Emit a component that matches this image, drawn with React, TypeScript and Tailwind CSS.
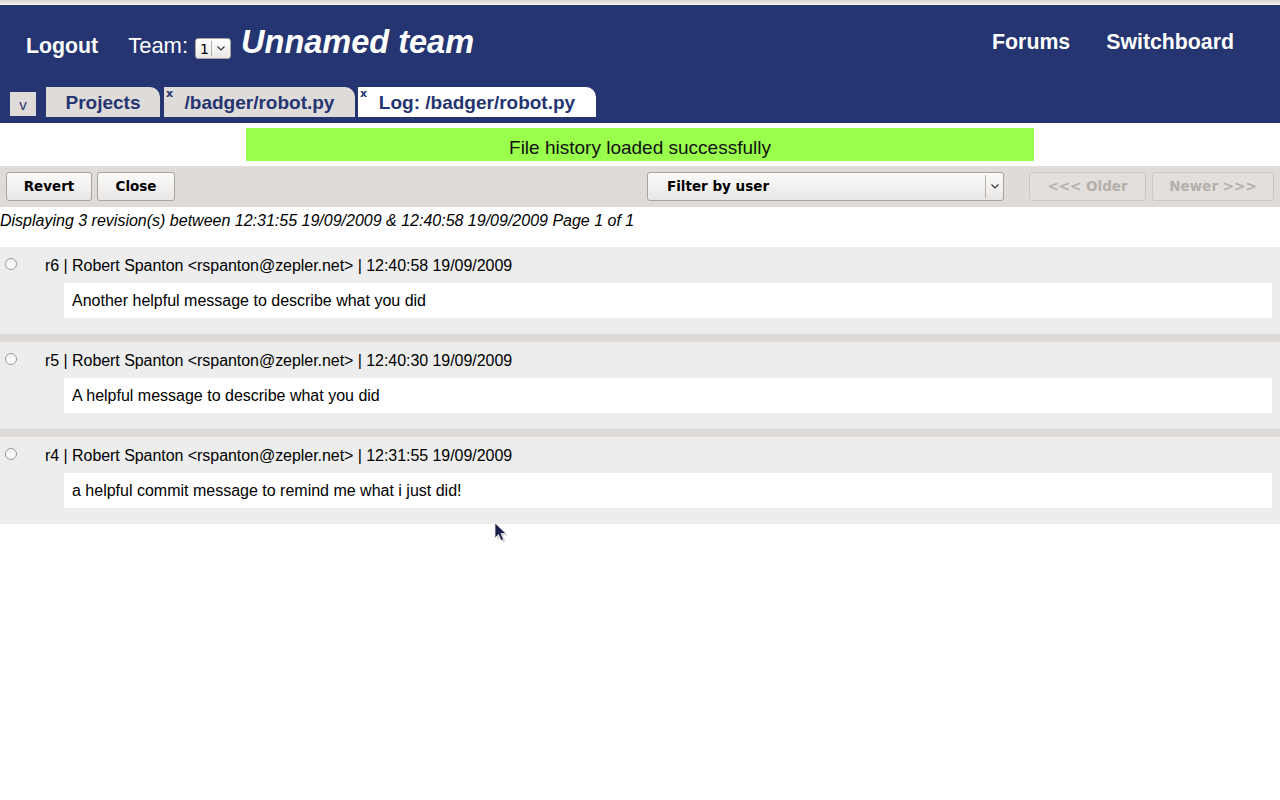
import React from "react";

function Chevron({ className = "" }: { className?: string }) {
  return (
    <svg width="8" height="5" viewBox="0 0 8 5" className={className}>
      <path d="M0.5 0.5 L4 4 L7.5 0.5" fill="none" stroke="#333" strokeWidth="1.1" />
    </svg>
  );
}

function Tab({
  label,
  width,
  active,
  closable,
}: {
  label: string;
  width: string;
  active?: boolean;
  closable?: boolean;
}) {
  return (
    <div
      className={`relative h-[30px] ${width} rounded-tr-[10px] flex items-center justify-center ${
        active ? "bg-white" : "bg-[#dfdbd8]"
      }`}
    >
      {closable && (
        <span className="absolute left-[2px] top-[1px] text-[11px] leading-none font-bold text-[#253571] font-['DejaVu_Sans',sans-serif]">
          x
        </span>
      )}
      <span className="text-[19px] font-bold text-[#253571] leading-none">{label}</span>
    </div>
  );
}

function Btn({ label, width, disabled }: { label: string; width: string; disabled?: boolean }) {
  return (
    <div
      className={`h-[29px] ${width} rounded-[3px] border flex items-center justify-center text-[13.5px] font-bold font-['DejaVu_Sans',sans-serif] ${
        disabled
          ? "border-[#cdc8c3] bg-[#e3dfdc] text-[#b3afab]"
          : "border-[#a9a49f] bg-gradient-to-b from-[#fbfbfa] to-[#e9e7e5] text-black"
      }`}
    >
      {label}
    </div>
  );
}

function Row({ header, message }: { header: string; message: string }) {
  return (
    <div className="flex bg-[#ededed] h-[87px]">
      <div className="w-[45px] pl-[5px] pt-[11px]">
        <div className="w-[12px] h-[12px] rounded-full border border-[#9a9a9a] bg-gradient-to-b from-[#f2f2f2] to-white" />
      </div>
      <div className="flex-1 pr-[8px] pt-[10px]">
        <div className="text-[16px] leading-[18px] tracking-[-0.05px] text-black">{header}</div>
        <div className="ml-[19px] mt-[8px] h-[35px] bg-white flex items-center pl-[8px] text-[16px] leading-[18px] text-black">
          {message}
        </div>
      </div>
    </div>
  );
}

export default function App() {
  return (
    <div className="relative w-[1280px] h-[800px] bg-white font-['Liberation_Sans',Arial,sans-serif] overflow-hidden">
      <div className="h-[5px] bg-gradient-to-b from-[#d9d6d2] to-[#f3f2f0]" />
      <div className="bg-[#253571]">
        <div className="flex justify-between h-[78px]">
          <div className="flex items-baseline pl-[26px] pt-[21px] text-white leading-none">
            <span className="text-[21.3px] font-bold">Logout</span>
            <span className="text-[22px] ml-[30px]">Team:</span>
            <span className="self-start mt-[12px] ml-[7px] inline-flex items-center h-[21px] w-[36px] rounded-[3px] border border-[#a9a49f] bg-gradient-to-b from-white to-[#ebe9e7] text-black">
              <span className="text-[14px] leading-none pl-[4px] pr-[2px] font-['DejaVu_Sans',sans-serif]">1</span>
              <span className="h-[15px] w-px bg-[#b5b0ab]" />
              <span className="flex-1 flex justify-center">
                <Chevron />
              </span>
            </span>
            <span className="text-[32.5px] font-bold italic ml-[10px]">Unnamed team</span>
          </div>
          <div className="flex items-baseline pr-[46px] pt-[27px] gap-[36px] text-white leading-none">
            <span className="text-[21.3px] font-bold">Forums</span>
            <span className="text-[21.3px] font-bold">Switchboard</span>
          </div>
        </div>
        <div className="flex items-end h-[40px] pl-[10px] pb-[6px]">
          <div className="w-[26px] h-[24px] mb-[1px] bg-[#dfdbd8] flex items-center justify-center text-[15px] text-[#253571] leading-none">
            v
          </div>
          <div className="ml-[10px]">
            <Tab label="Projects" width="w-[114px]" />
          </div>
          <div className="ml-[4px]">
            <Tab label="/badger/robot.py" width="w-[191px]" closable />
          </div>
          <div className="ml-[3px]">
            <Tab label="Log: /badger/robot.py" width="w-[238px]" active closable />
          </div>
        </div>
      </div>

      <div className="mt-[5px] mx-auto w-[788px] h-[33px] bg-[#99ff4c] flex items-center justify-center pt-[6px] text-[19px] leading-none text-[#111]">
        File history loaded successfully
      </div>

      <div className="mt-[5px] h-[41px] bg-[#dfdbd8] flex items-center justify-between px-[6px]">
        <div className="flex gap-[5px]">
          <Btn label="Revert" width="w-[86px]" />
          <Btn label="Close" width="w-[78px]" />
        </div>
        <div className="flex items-center">
          <div className="h-[29px] w-[357px] rounded-[3px] border border-[#a9a49f] bg-gradient-to-b from-[#fbfbfa] to-[#e9e7e5] flex items-center">
            <span className="flex-1 pl-[19px] text-[13.5px] font-bold font-['DejaVu_Sans',sans-serif] text-black">
              Filter by user
            </span>
            <span className="h-[23px] w-px bg-[#b5b0ab]" />
            <span className="w-[17px] flex justify-center">
              <Chevron />
            </span>
          </div>
          <div className="ml-[25px]">
            <Btn label="<<< Older" width="w-[117px]" disabled />
          </div>
          <div className="ml-[6px]">
            <Btn label="Newer >>>" width="w-[122px]" disabled />
          </div>
        </div>
      </div>

      <div className="mt-[5px] text-[16px] leading-[18px] italic text-black">
        Displaying 3 revision(s) between 12:31:55 19/09/2009 &amp; 12:40:58 19/09/2009 Page 1 of 1
      </div>

      <div className="mt-[17px] flex flex-col">
        <Row
          header="r6 | Robert Spanton <rspanton@zepler.net> | 12:40:58 19/09/2009"
          message="Another helpful message to describe what you did"
        />
        <div className="h-[8px] bg-[#dfdbd8]" />
        <Row
          header="r5 | Robert Spanton <rspanton@zepler.net> | 12:40:30 19/09/2009"
          message="A helpful message to describe what you did"
        />
        <div className="h-[8px] bg-[#dfdbd8]" />
        <Row
          header="r4 | Robert Spanton <rspanton@zepler.net> | 12:31:55 19/09/2009"
          message="a helpful commit message to remind me what i just did!"
        />
      </div>

      <svg className="absolute left-[494px] top-[522px]" width="14" height="22" viewBox="0 0 14 22">
        <path d="M2 2 L2 17 L5.5 13.5 L8 19.5 L10.5 18.5 L8 12.5 L13 12.5 Z" fill="rgba(0,0,0,0.15)" transform="translate(1,1)" />
        <path d="M1 1 L1 16 L4.5 12.5 L7 18.5 L9.5 17.5 L7 11.5 L12 11.5 Z" fill="#1a1f4a" stroke="#e8e8e8" strokeWidth="0.8" />
      </svg>
    </div>
  );
}
